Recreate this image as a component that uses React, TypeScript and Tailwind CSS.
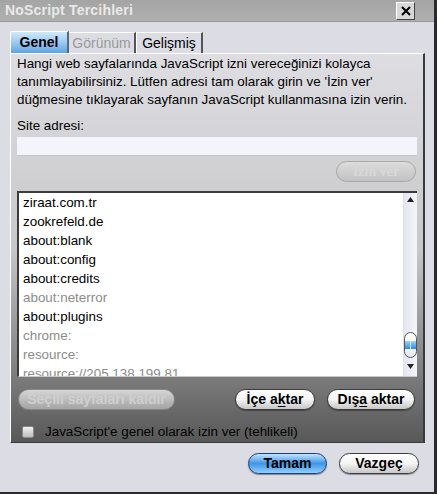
import React from "react";

const SITES: { name: string; muted?: boolean }[] = [
  { name: "ziraat.com.tr" },
  { name: "zookrefeld.de" },
  { name: "about:blank" },
  { name: "about:config" },
  { name: "about:credits" },
  { name: "about:neterror", muted: true },
  { name: "about:plugins" },
  { name: "chrome:", muted: true },
  { name: "resource:", muted: true },
  { name: "resource://205.138.199.81", muted: true },
];

function Pill({
  children,
  className = "",
  disabled = false,
  blue = false,
}: {
  children: React.ReactNode;
  className?: string;
  disabled?: boolean;
  blue?: boolean;
}) {
  if (blue) {
    return (
      <div
        className={`flex items-center justify-center h-[21px] rounded-full border border-[#1d3f74] bg-gradient-to-b from-[#bfe4ff] via-[#3f95e6] to-[#8fd0ff] text-[14px] font-bold text-black shadow-[0_1px_1px_rgba(0,0,0,0.4)] ${className}`}
      >
        <span>{children}</span>
      </div>
    );
  }
  if (disabled) {
    return (
      <div
        className={`flex items-center justify-center h-[21px] rounded-full border border-[#888] bg-gradient-to-b from-[#d6d6d6] to-[#a4a4a4] text-[14px] font-bold text-[#cfcfcf] ${className}`}
      >
        <span>{children}</span>
      </div>
    );
  }
  return (
    <div
      className={`flex items-center justify-center h-[21px] rounded-full border border-[#3c3c3c] bg-gradient-to-b from-white via-[#f4f4f4] to-[#c6c6c6] text-[14px] font-bold text-black shadow-[0_1px_1px_rgba(0,0,0,0.35)] ${className}`}
    >
      <span>{children}</span>
    </div>
  );
}

export default function App() {
  return (
    <div
      className="w-[437px] h-[494px] bg-[#dcdde4] flex flex-col border-r-[3px] border-b-[2px] border-[#2a2a2a] overflow-hidden"
      style={{ fontFamily: '"Liberation Sans", Arial, sans-serif' }}
    >
      {/* title bar */}
      <div className="h-[22px] shrink-0 flex items-center justify-between pl-[5px] pr-[19px] bg-gradient-to-b from-[#a4a4a4] to-[#b0b0b0] border-b border-[#9a9a9a]">
        <span className="text-[14px] font-bold text-[#e9e9e9] tracking-[0.2px]">NoScript Tercihleri</span>
        <div className="w-[19px] h-[18px] flex items-center justify-center bg-[#d8d8d8] border border-t-white border-l-white border-r-[#404040] border-b-[#404040]">
          <svg width="10" height="10" viewBox="0 0 10 10">
            <path d="M1 1 L9 9 M9 1 L1 9" stroke="#000" strokeWidth="2" />
          </svg>
        </div>
      </div>

      <div className="flex-1 flex flex-col pl-[10px] pr-[9px] pt-[9px]">
        {/* tabs */}
        <div className="flex h-[22px] items-end text-[14px]">
          <div className="h-[22px] w-[59px] flex items-center justify-center font-bold text-black bg-gradient-to-b from-[#d2e8fb] via-[#9ccaf2] to-[#5ea3e2] border-t border-l border-white border-r-2 border-r-[#5a6a7a] rounded-tl-[2px]">
            Genel
          </div>
          <div className="h-[21px] w-[67px] flex items-center justify-center text-[#9a9a9a] border-t border-white border-r-2 border-r-[#555]">
            Görünüm
          </div>
          <div className="h-[21px] w-[67px] flex items-center justify-center text-black border-t border-l border-white border-r-2 border-r-[#555]">
            Gelişmiş
          </div>
        </div>

        {/* panel */}
        <div className="h-[390px] flex flex-col border-t border-l border-white border-r-2 border-r-[#3a3a3a] border-b border-b-[#3a3a3a] bg-gradient-to-b from-[#dedee2] via-[#c8c8cb] via-50% to-[#585858] px-[6px] pt-[1px]">
          <p className="text-[13.4px] leading-[18px] text-black whitespace-nowrap">
            Hangi web sayfalarında JavaScript izni vereceğinizi kolayca
            <br />
            tanımlayabilirsiniz. Lütfen adresi tam olarak girin ve 'İzin ver'
            <br />
            düğmesine tıklayarak sayfanın JavaScript kullanmasına izin verin.
          </p>
          <div className="text-[13.4px] text-black mt-[9px] leading-[16px]">Site adresi:</div>
          <div className="mt-[3px] h-[19px] bg-[#f4f5fb] border-b border-[#c4c4cc]" />
          <div className="flex justify-end mt-[5px] pr-[1px]">
            <div
              className="w-[80px] h-[21px] rounded-full border border-[#a8a8a8] bg-gradient-to-b from-[#dcdcdc] to-[#c2c2c2] flex items-center justify-center text-[14px] font-bold text-[#d8d8d8]"
              style={{ fontFamily: '"Liberation Serif", serif' }}
            >
              İzin ver
            </div>
          </div>

          {/* list */}
          <div className="mt-[9px] h-[186px] flex bg-white border-t-2 border-l-2 border-[#3c3c3c] border-b border-b-[#c8c8c8] overflow-hidden">
            <div className="flex-1 pl-[4px] overflow-hidden">
              {SITES.map((s) => (
                <div
                  key={s.name}
                  className={`h-[19px] text-[13.4px] leading-[19px] whitespace-nowrap ${s.muted ? "text-[#8c8c8c]" : "text-black"}`}
                >
                  {s.name}
                </div>
              ))}
            </div>
            <div className="w-[14px] flex flex-col bg-gradient-to-r from-[#e4e6f0] to-[#f4f5fa] border-l border-[#e0e0e8]">
              <div className="h-[14px] flex items-center justify-center">
                <svg width="7" height="5" viewBox="0 0 7 5">
                  <path d="M3.5 0 L7 5 L0 5 Z" fill="#222" />
                </svg>
              </div>
              <div className="flex-1" />
              <div className="h-[26px] rounded-full border border-[#555] bg-gradient-to-b from-white to-[#e8e8ee] flex items-center justify-center">
                <div className="w-full h-[8px] bg-gradient-to-b from-[#9bd3ff] to-[#2f88dc] flex">
                  <div className="flex-1 border-r border-[#cfe8ff]" />
                  <div className="flex-1" />
                </div>
              </div>
              <div className="h-[18px] flex items-center justify-center">
                <svg width="7" height="5" viewBox="0 0 7 5">
                  <path d="M0 0 L7 0 L3.5 5 Z" fill="#222" />
                </svg>
              </div>
            </div>
          </div>

          {/* buttons */}
          <div className="flex items-center mt-[12px] pr-[2px]">
            <Pill disabled className="w-[157px] ml-[1px]">
              Seçili sayfaları kaldır
            </Pill>
            <div className="flex-1" />
            <Pill className="w-[80px]">
              İçe a<span className="underline underline-offset-2">k</span>tar
            </Pill>
            <Pill className="w-[88px] ml-[12px]">
              Dış<span className="underline underline-offset-2">a</span> aktar
            </Pill>
          </div>

          <div className="flex items-center mt-[12px] pl-[5px]">
            <div className="w-[12px] h-[12px] rounded-[2px] border border-[#8a8a8a] bg-gradient-to-b from-[#f2f2f2] to-[#bcbcbc]" />
            <span className="ml-[11px] text-[13.4px] text-black">JavaScript'e genel olarak izin ver (tehlikeli)</span>
          </div>
        </div>

        {/* footer */}
        <div className="flex justify-end mt-[10px] pr-[6px]">
          <Pill blue className="w-[79px]">
            Tamam
          </Pill>
          <Pill className="w-[80px] ml-[12px]">Vazgeç</Pill>
        </div>
      </div>
    </div>
  );
}
